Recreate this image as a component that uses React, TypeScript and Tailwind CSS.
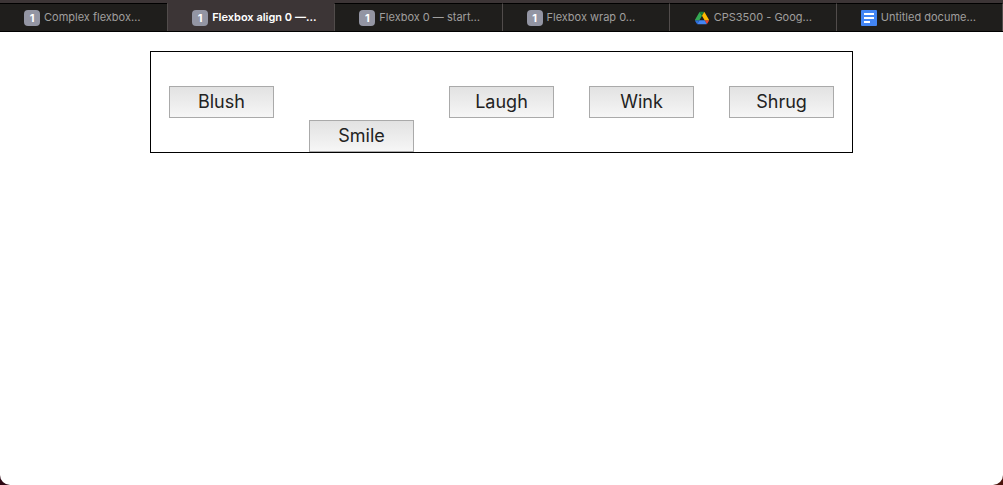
import React from "react";

type Icon = "one" | "drive" | "docs";

const tabs: { title: string; icon: Icon; active?: boolean }[] = [
  { title: "Complex flexbox…", icon: "one" },
  { title: "Flexbox align 0 —…", icon: "one", active: true },
  { title: "Flexbox 0 — start…", icon: "one" },
  { title: "Flexbox wrap 0…", icon: "one" },
  { title: "CPS3500 - Goog…", icon: "drive" },
  { title: "Untitled docume…", icon: "docs" },
];

const buttons = [
  { label: "Blush" },
  { label: "Smile", end: true },
  { label: "Laugh" },
  { label: "Wink" },
  { label: "Shrug" },
];

function TabIcon({ icon }: { icon: Icon }) {
  if (icon === "one") {
    return (
      <span className="flex size-4 shrink-0 items-center justify-center rounded bg-[#9395a3] text-[11px] leading-4 font-bold text-white">
        1
      </span>
    );
  }
  if (icon === "drive") {
    return (
      <svg viewBox="-6 -7 99.300 92" className="size-4 shrink-0" aria-hidden="true">
        <path d="m6.600 66.850 3.850 6.650c.8 1.400 1.950 2.500 3.300 3.300l13.750-23.800h-27.500c0 1.550.4 3.100 1.200 4.500z" fill="#2b6fe0" />
        <path d="m43.650 25-13.750-23.800c-1.350.8-2.500 1.900-3.300 3.300l-25.400 44a9.060 9.060 0 0 0 -1.200 4.500h27.500z" fill="#34a853" />
        <path d="m43.650 25 13.750-23.800c-1.350-.8-2.900-1.200-4.500-1.200h-18.500c-1.600 0-3.150.45-4.500 1.200z" fill="#188038" />
        <path d="m73.550 76.800c1.350-.8 2.500-1.900 3.300-3.300l1.600-2.750 7.650-13.250c.8-1.400 1.200-2.950 1.200-4.500h-27.500l5.850 11.500z" fill="#ea4335" />
        <path d="m59.800 53h-32.300l-13.750 23.800c1.350.8 2.900 1.200 4.500 1.200h50.800c1.600 0 3.150-.45 4.500-1.200z" fill="#4285f4" />
        <path d="m73.400 26.500-12.700-22c-.8-1.400-1.950-2.500-3.300-3.300l-13.750 23.800 16.150 28h27.450c0-1.550-.4-3.100-1.200-4.500z" fill="#ffba00" />
      </svg>
    );
  }
  return (
    <svg viewBox="0 0 16 16" className="size-4 shrink-0" aria-hidden="true">
      <rect width="16" height="16" rx="1" fill="#4285f4" />
      <path d="M3 3H13V5H3ZM3 7H13V9H3ZM3 11H9V13H3Z" fill="#fff" />
    </svg>
  );
}

export default function App() {
  return (
    <div className="flex min-h-screen flex-col bg-[linear-gradient(to_right,#2c0612,#4a130b)] font-['Inter','Liberation_Sans',sans-serif]">
      <nav aria-label="Browser tabs" className="bg-[#3c3536] pt-[3px]">
        <div className="grid h-[29px] grid-cols-6 border-b border-black">
          {tabs.map((tab) => (
            <a
              key={tab.title}
              href="#"
              aria-current={tab.active ? "page" : undefined}
              className={`flex min-w-0 items-center gap-1 border-t border-x-[#514c4b] pl-6 text-[11px] whitespace-nowrap not-first:border-l last:border-r ${
                tab.active
                  ? "border-t-[#3c3536] bg-[#3c3536] font-semibold text-white"
                  : "border-t-black bg-[#1f1e1c] text-[#a09f9e]"
              }`}
            >
              <TabIcon icon={tab.icon} />
              <span>{tab.title}</span>
            </a>
          ))}
        </div>
      </nav>
      <main className="grow rounded-b-[10px] bg-white pt-[19px]">
        <div className="mx-auto flex h-[102px] w-[70%] items-center justify-around border border-black">
          {buttons.map((button) => (
            <button
              key={button.label}
              type="button"
              className={`h-8 w-[15%] border border-[#aaaaaa] bg-linear-to-b from-[#e2e2e2] to-[#f6f6f6] text-lg leading-7 text-[#222222] ${
                button.end ? "self-end" : ""
              }`}
            >
              {button.label}
            </button>
          ))}
        </div>
      </main>
    </div>
  );
}
